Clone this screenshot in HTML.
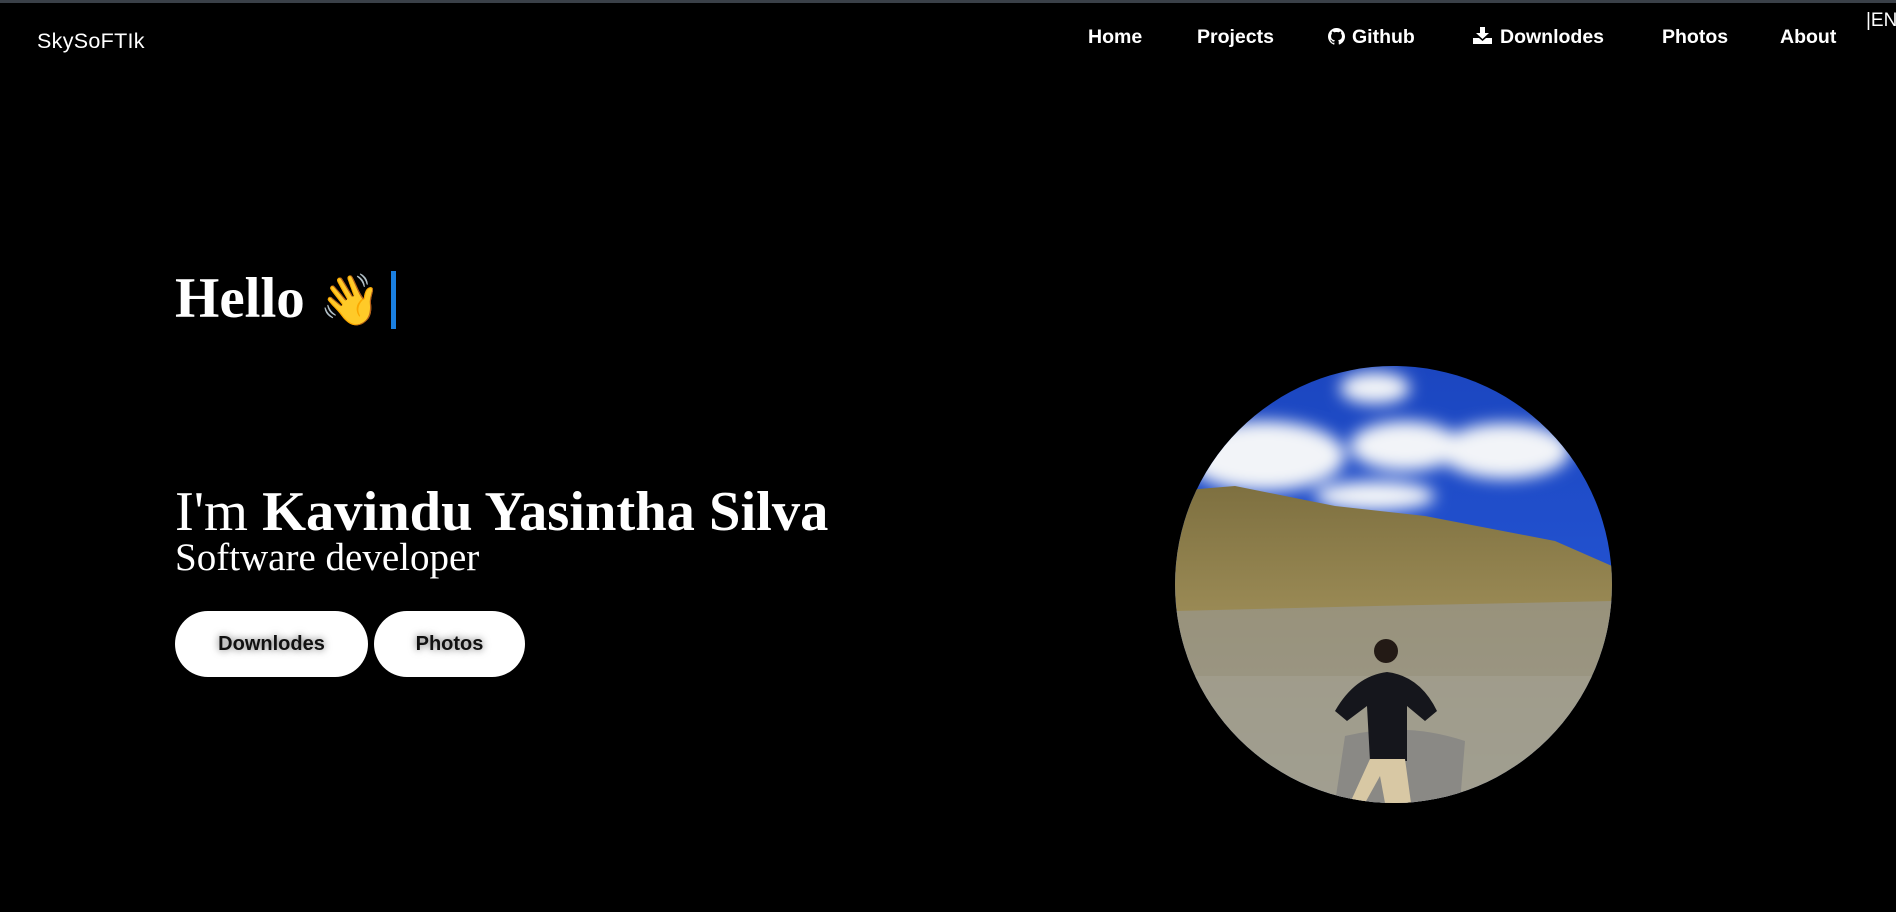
<!DOCTYPE html>
<html><head><meta charset="utf-8"><style>
*{margin:0;padding:0;box-sizing:border-box}
html,body{width:1896px;height:912px;background:#000;overflow:hidden;color:#fff}
.top{position:absolute;left:0;top:0;width:1896px;height:3px;background:#3a4048}
.logo{position:absolute;left:37px;top:29px;font:21.5px "Liberation Sans",sans-serif;letter-spacing:0.3px}
.nav a{position:absolute;top:26px;font:bold 19.5px "Liberation Sans",sans-serif;color:#fff;text-decoration:none;white-space:nowrap}
.en{position:absolute;left:1866px;top:10px;font:19px "Liberation Sans",sans-serif}
.hello{position:absolute;left:175px;top:266px;font:bold 57px "Liberation Serif",serif;white-space:nowrap}
.cursor{position:absolute;left:391px;top:271px;width:5px;height:58px;background:#1a7fe0}
.name{position:absolute;left:175px;top:480px;font:56.5px "Liberation Serif",serif;white-space:nowrap}
.role{position:absolute;left:175px;top:535px;font:39px "Liberation Serif",serif;white-space:nowrap}
.btn{position:absolute;top:611px;height:66px;border-radius:33px;background:#fff;color:#111;font:bold 20px "Liberation Sans",sans-serif;display:flex;align-items:center;justify-content:center;text-shadow:0 0 8px rgba(0,0,0,.6)}
</style></head><body>
<div class="top"></div>
<div class="logo">SkySoFTIk</div>
<div class="nav">
<a style="left:1088px">Home</a>
<a style="left:1197px">Projects</a>
<a style="left:1328px"><svg width="17" height="17" viewBox="0 0 16 16" style="vertical-align:-2px;margin-right:7px"><path fill="#fff" d="M8 0C3.6 0 0 3.6 0 8c0 3.5 2.3 6.5 5.5 7.6.4.1.5-.2.5-.4v-1.4c-2.2.5-2.7-1-2.7-1-.4-.9-.9-1.2-.9-1.2-.7-.5.1-.5.1-.5.8.1 1.2.8 1.2.8.7 1.2 1.9.9 2.3.7.1-.5.3-.9.5-1.1-1.8-.2-3.6-.9-3.6-4 0-.9.3-1.6.8-2.1-.1-.2-.4-1 .1-2.1 0 0 .7-.2 2.2.8.6-.2 1.3-.3 2-.3s1.4.1 2 .3c1.5-1 2.2-.8 2.2-.8.4 1.1.2 1.9.1 2.1.5.6.8 1.3.8 2.1 0 3.1-1.9 3.7-3.6 3.9.3.3.6.8.6 1.5v2.2c0 .2.1.5.6.4C13.7 14.5 16 11.5 16 8c0-4.4-3.6-8-8-8z"/></svg>Github</a>
<a style="left:1473px"><svg width="19" height="17" viewBox="0 0 19 17" style="vertical-align:-1px;margin-right:8px"><path fill="#fff" d="M7 0h5v6h4l-6.5 6L3 6h4z"/><path fill="#fff" d="M0 11h6l3.5 3 3.5-3h6v6H0z"/></svg>Downlodes</a>
<a style="left:1662px">Photos</a>
<a style="left:1780px">About</a>
</div>
<div class="en">|EN</div>
<div class="hello">Hello <span style="font-family:'Noto Color Emoji',sans-serif;font-weight:normal;font-size:50px">👋</span></div>
<div class="cursor"></div>
<div class="name">I'm <b>Kavindu Yasintha Silva</b></div>
<div class="role">Software developer</div>
<div class="btn" style="left:175px;width:193px">Downlodes</div>
<div class="btn" style="left:374px;width:151px">Photos</div>
<svg style="position:absolute;left:1175px;top:366px" width="437" height="437" viewBox="0 0 437 437">
<defs><clipPath id="c"><circle cx="218.5" cy="218.5" r="218.5"/></clipPath>
<linearGradient id="sky" x1="0" y1="0" x2="0" y2="1"><stop offset="0" stop-color="#1b46c0"/><stop offset="1" stop-color="#2a5ee0"/></linearGradient>
<linearGradient id="hill" x1="0" y1="0" x2="0" y2="1"><stop offset="0" stop-color="#7e7040"/><stop offset=".4" stop-color="#9a8a55"/><stop offset="1" stop-color="#a8a490"/></linearGradient>
<filter id="b"><feGaussianBlur stdDeviation="8"/></filter></defs>
<g clip-path="url(#c)">
<rect width="437" height="437" fill="url(#sky)"/>
<g filter="url(#b)" fill="#f2f4f8">
<ellipse cx="90" cy="90" rx="80" ry="35"/><ellipse cx="230" cy="80" rx="55" ry="25"/><ellipse cx="330" cy="85" rx="65" ry="28"/><ellipse cx="200" cy="22" rx="35" ry="16"/><ellipse cx="200" cy="130" rx="60" ry="15"/>
</g>
<path d="M0 125 L60 120 L160 140 L250 150 L380 175 L437 200 L437 437 L0 437Z" fill="url(#hill)"/>
<path d="M0 245 L200 240 L437 235 L437 437 L0 437Z" fill="#98968a" opacity=".75"/>
<rect x="0" y="310" width="437" height="127" fill="#a6a496" opacity=".5"/>
<path d="M170 370 Q230 355 290 375 L285 437 L160 437Z" fill="#8a8985"/>
<circle cx="211" cy="285" r="12" fill="#231a15"/>
<path d="M160 345 Q180 310 212 306 Q245 310 262 345 L250 355 L232 340 L232 395 L195 395 L192 340 L172 355Z" fill="#15161c"/>
<path d="M195 393 L230 393 L236 437 L210 437 L205 410 L190 437 L175 437Z" fill="#d8c8a4"/>
</g></svg>
</body></html>
